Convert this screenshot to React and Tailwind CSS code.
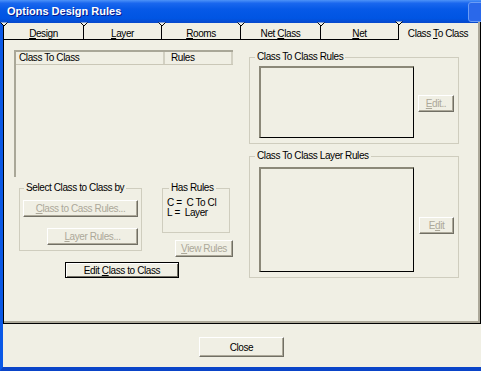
import React from "react";

// Windows XP style "Options Design Rules" dialog, Class To Class tab
const Notch = () => (
  <svg className="absolute -left-[4px] -top-[1px]" width="8" height="5" viewBox="0 0 8 5">
    <path d="M0.5 0.5 L4 4 L7.5 0.5" fill="#f0efe4" stroke="#000" strokeWidth="1" />
  </svg>
);

const Tab = ({ children, className }) => (
  <div className={`relative flex items-center justify-center border-l border-black ${className}`}>
    <Notch />
    <span className="pt-[4px]">{children}</span>
  </div>
);

const Btn = ({ children, className, disabled }) => (
  <div
    className={`flex items-center justify-center border-t border-l border-white border-r border-b border-r-[#716f64] border-b-[#716f64] shadow-[inset_-1px_-1px_0_#aca899] ${
      disabled ? "text-[#aca899]" : "text-black"
    } ${className}`}
  >
    {children}
  </div>
);

const Group = ({ label, className, legendClass, children }) => (
  <fieldset className={`border border-[#cfcdbe] ${className}`}>
    <legend className={`px-[2px] leading-[12px] ${legendClass}`}>{label}</legend>
    {children}
  </fieldset>
);

export default function App() {
  return (
    <div className="w-[481px] h-[371px] overflow-hidden flex flex-col bg-[#f0efe4] font-['Liberation_Sans',Arial,sans-serif] text-[10px] tracking-[-0.4px] text-black">
      {/* title bar */}
      <div className="h-[23px] shrink-0 flex items-center overflow-hidden bg-[linear-gradient(to_bottom,#4d92f8_0%,#1a67ee_14%,#0659e7_40%,#0055e3_80%,#0748cb_100%)]">
        <span className="pl-[7px] text-[11px] font-bold tracking-normal text-white [text-shadow:1px_1px_0_#0a1a8a]">
          Options Design Rules
        </span>
        <div className="ml-auto -mr-[9px] mt-[1px] w-[22px] h-[20px] shrink-0 rounded-[3px] border border-[#6b9cf5] bg-[#2a68ea]" />
      </div>

      {/* body */}
      <div className="flex-1 flex flex-col border-l-[3px] border-b-[4px] border-l-[#0a58e6] border-b-[#0a44c8]">
        {/* tabs */}
        <div className="h-[17px] shrink-0 flex">
          <Tab className="w-[80px] border-b"><u>D</u>esign</Tab>
          <Tab className="w-[78px] border-b"><u>L</u>ayer</Tab>
          <Tab className="w-[79px] border-b"><u>R</u>ooms</Tab>
          <Tab className="w-[80px] border-b">Net <u>C</u>lass</Tab>
          <Tab className="w-[78px] border-b"><u>N</u>et</Tab>
          <Tab className="w-[83px] border-r shadow-[inset_-2px_0_0_#aca899] pr-[3px] -mt-[1px]">
            Class <u>T</u>o Class
          </Tab>
        </div>

        {/* tab panel */}
        <div className="h-[284px] shrink-0 flex border-l border-r border-b border-black shadow-[inset_-2px_-2px_0_#aca899] pl-[10px] pt-[10px]">
          {/* left column */}
          <div className="w-[219px] shrink-0 flex flex-col">
            <div className="h-[127px] border-t-2 border-l-2 border-[#a9a798] flex flex-col">
              <div className="h-[13px] flex border-b border-[#cac7b7]">
                <div className="w-[149px] pl-[3px] leading-[12px] border-r-2 border-[#d2d0c2]">Class To Class</div>
                <div className="flex-1 pl-[6px] leading-[12px] border-r-2 border-[#d2d0c2]">Rules</div>
              </div>
            </div>

            <div className="mt-[5px] flex items-start">
              <Group
                label="Select Class to Class by"
                className="ml-[5px] w-[123px] h-[69px]"
                legendClass="ml-[4px]"
              >
                <div className="flex flex-col items-end pr-[3px] pt-[6px] gap-[11px]">
                  <Btn disabled className="w-[115px] h-[17px]">
                    <span><u>C</u>lass to Cass Rules...</span>
                  </Btn>
                  <Btn disabled className="w-[91px] h-[17px]">
                    <span><u>L</u>ayer Rules...</span>
                  </Btn>
                </div>
              </Group>

              <div className="ml-[20px] flex flex-col items-start">
                <Group label="Has Rules" className="w-[68px] h-[51px]" legendClass="ml-[6px]">
                  <div className="pl-[4px] pt-[4px] leading-[10px] overflow-hidden whitespace-nowrap w-[62px]">
                    <div>C&nbsp;=&nbsp;&nbsp;C To Cl</div>
                    <div>L&nbsp;=&nbsp;&nbsp;Layer</div>
                  </div>
                </Group>
                <Btn disabled className="mt-[7px] ml-[13px] w-[58px] h-[17px]">
                  <span><u>V</u>iew Rules</span>
                </Btn>
              </div>
            </div>

            <div className="mt-[5px] ml-[51px] w-[114px] h-[16px] flex items-center justify-center border border-black shadow-[inset_1px_1px_0_#fff,inset_-1px_-1px_0_#716f64]">
              <span>Edit <u>C</u>lass to Class</span>
            </div>
          </div>

          {/* right column */}
          <div className="ml-[16px] mt-[1px] flex flex-col">
            <Group label="Class To Class Rules" className="w-[210px] h-[93px]" legendClass="ml-[5px]">
              <div className="flex items-start pl-[9px] pt-[3px]">
                <div className="w-[155px] h-[72px] border-t-2 border-l-2 border-r border-b border-[#8b8878] border-r-black border-b-black" />
                <Btn disabled className="ml-[4px] mt-[29px] w-[36px] h-[17px]">
                  <span><u>E</u>dit..</span>
                </Btn>
              </div>
            </Group>

            <Group label="Class To Class Layer Rules" className="mt-[6px] w-[210px] h-[128px]" legendClass="ml-[5px]">
              <div className="flex items-start pl-[9px] pt-[5px]">
                <div className="w-[155px] h-[105px] border-t-2 border-l-2 border-r border-b border-[#8b8878] border-r-black border-b-black" />
                <Btn disabled className="ml-[5px] mt-[50px] w-[35px] h-[17px]">
                  <span>E<u>d</u>it</span>
                </Btn>
              </div>
            </Group>
          </div>
        </div>

        {/* footer */}
        <div className="flex-1 flex items-start pl-[196px] pt-[13px]">
          <Btn className="w-[85px] h-[20px]">Close</Btn>
        </div>
      </div>
    </div>
  );
}
